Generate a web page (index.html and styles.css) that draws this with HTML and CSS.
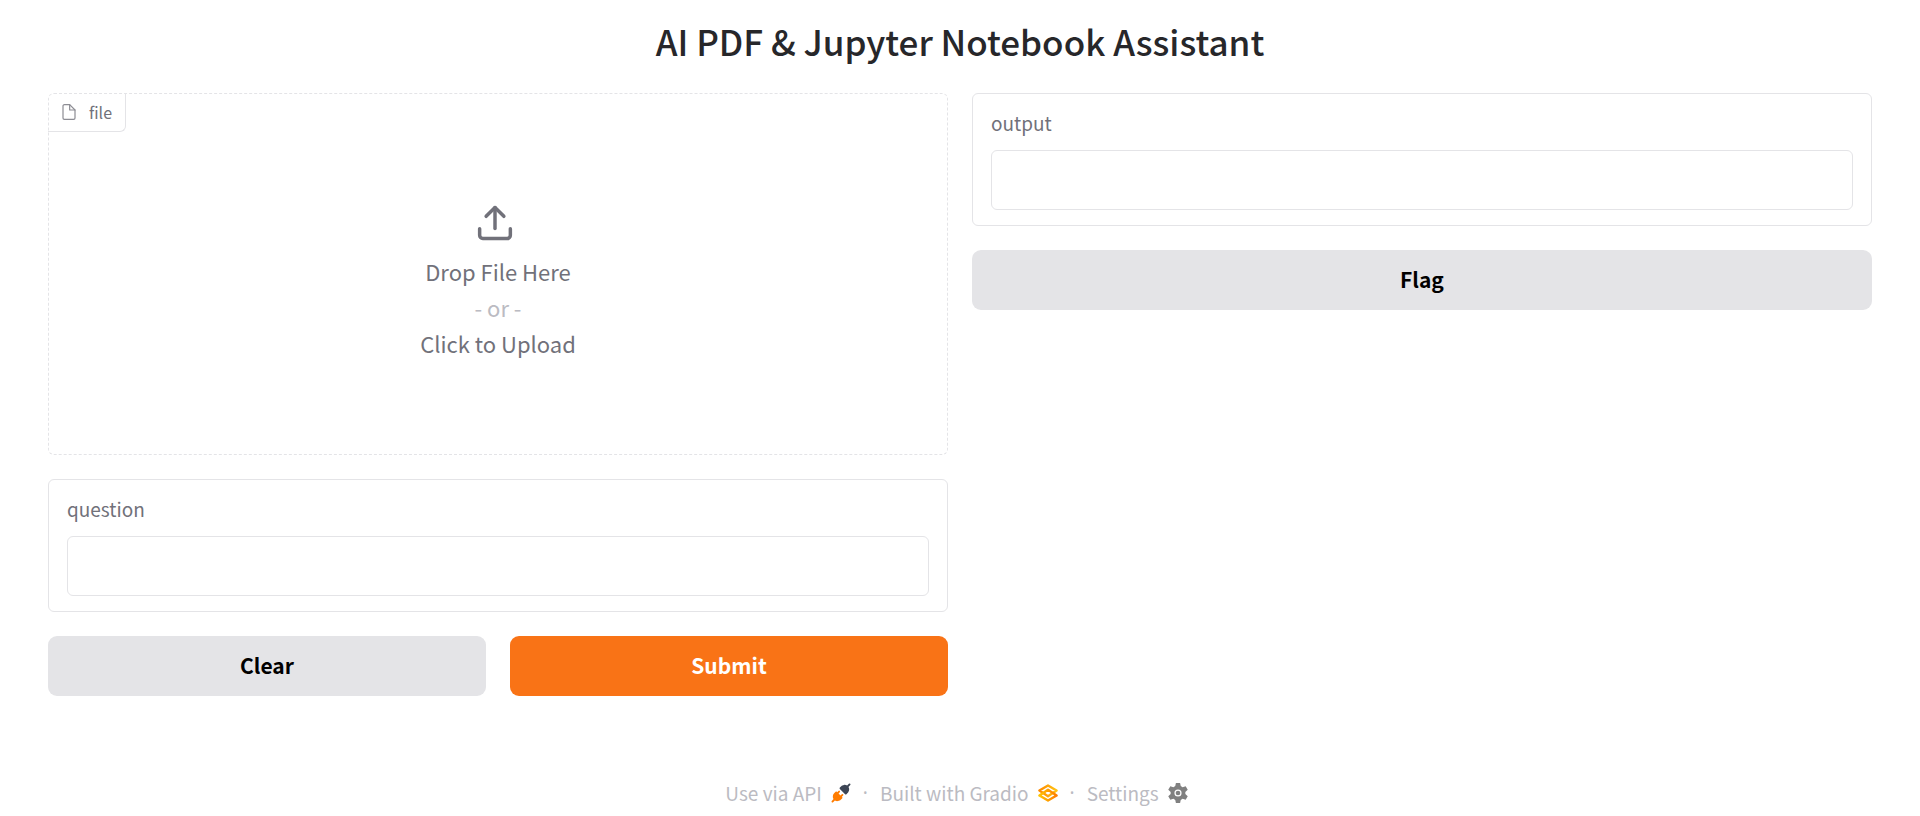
FILE: index.html
```html
<!DOCTYPE html>
<html lang="en">
<head>
<meta charset="utf-8">
<meta name="viewport" content="width=device-width, initial-scale=1">
<title>AI PDF &amp; Jupyter Notebook Assistant</title>
<link rel="stylesheet" href="styles.css">
</head>
<body>
<main class="app">
  <h1 class="title">AI PDF &amp; Jupyter Notebook Assistant</h1>
  <div class="columns">
    <section class="column">
      <div class="upload">
        <div class="upload-label">
          <svg class="file-icon" viewBox="0 0 24 24" fill="none" stroke="currentColor" stroke-width="1.8" stroke-linecap="round" stroke-linejoin="round" aria-hidden="true"><path d="M13 1H5a2 2 0 0 0-2 2v18a2 2 0 0 0 2 2h14a2 2 0 0 0 2-2V9z"/><path d="M13 1v8h8"/></svg>
          <span>file</span>
        </div>
        <button class="upload-area" type="button">
          <svg class="upload-icon" viewBox="0 0 24 24" fill="none" stroke="currentColor" stroke-width="2.2" stroke-linecap="round" stroke-linejoin="round" aria-hidden="true"><path d="M21.7 15.6v4.2a2 2 0 0 1-2 2H4.3a2 2 0 0 1-2-2v-4.2"/><path d="M17.6 7.8L12 2.2 6.4 7.8"/><path d="M12 2.2v13.2"/></svg>
          <span>Drop File Here</span>
          <span class="or">- or -</span>
          <span>Click to Upload</span>
        </button>
      </div>
      <div class="block">
        <label class="label" for="question">question</label>
        <input class="field" id="question" type="text">
      </div>
      <div class="actions">
        <button class="button" type="button">Clear</button>
        <button class="button primary" type="button">Submit</button>
      </div>
    </section>
    <section class="column">
      <div class="block">
        <label class="label" for="output">output</label>
        <input class="field" id="output" type="text" readonly>
      </div>
      <button class="button" type="button">Flag</button>
    </section>
  </div>
  <footer class="footer">
    <button class="footer-link" type="button">Use via API
      <svg class="footer-icon" viewBox="0 0 28 28" aria-hidden="true"><path fill="#3c4555" d="M26.94 2.94a1.33 1.33 0 0 0-1.88-1.88l-2.49 2.48c-1.45-.95-3.03-1.11-4.4-.9-1.62.25-3.06 1.03-3.78 1.75l-2 2a1.33 1.33 0 0 0 0 1.89l7.33 7.33c.52.52 1.37.52 1.89 0l2-2c.72-.72 1.5-2.16 1.75-3.79.2-1.36.05-2.94-.9-4.39z"/><path fill="#ff7c00" d="M12.28 12.94a1.33 1.33 0 0 0-1.89-1.88l-1.72 1.72-.39-.39a1.33 1.33 0 0 0-1.89 0l-2 2c-.72.72-1.5 2.16-1.75 3.78-.2 1.37-.05 2.95.9 4.4l-2.48 2.49a1.33 1.33 0 0 0 1.88 1.88l2.49-2.48c1.45.95 3.03 1.1 4.39.9 1.63-.25 3.07-1.03 3.79-1.75l2-2a1.33 1.33 0 0 0 0-1.89l-.39-.39 1.72-1.72a1.33 1.33 0 0 0-1.88-1.89l-1.73 1.73-2.78-2.79z"/></svg>
    </button>
    <span class="dot">·</span>
    <a class="footer-link" href="#gradio">Built with Gradio
      <svg class="footer-icon" viewBox="0 0 28 28" fill="none" stroke-width="3.4" stroke-linejoin="round" aria-hidden="true"><defs><linearGradient id="upper" x1="0" x2="1"><stop offset="0" stop-color="#ff8a00"/><stop offset="1" stop-color="#ffc414"/></linearGradient><linearGradient id="lower" x1="0" x2="1"><stop offset="0" stop-color="#ffc400"/><stop offset="1" stop-color="#ff7c00"/></linearGradient></defs><path stroke="url(#upper)" d="M2 10.4L14 3.4 26 10.4 14 18.4z"/><path stroke="url(#lower)" d="M2 17.6L14 9.6 26 17.6 14 24.6z"/></svg>
    </a>
    <span class="dot">·</span>
    <button class="footer-link" type="button">Settings
      <svg class="footer-icon" viewBox="0 0 24 24" aria-hidden="true"><path fill="#808080" fill-rule="evenodd" d="M9.5 0h5l.8 3.7 2.2 1.3 3.7-1.2 2.5 4.3-2.9 2.6v2.6l2.9 2.6-2.5 4.3-3.7-1.2-2.2 1.3-.8 3.7h-5l-.8-3.7L6.5 19l-3.7 1.2-2.5-4.3 2.9-2.6v-2.6L.3 8.1l2.5-4.3L6.5 5l2.2-1.3zM12 7.7a4.3 4.3 0 1 0 0 8.6 4.3 4.3 0 0 0 0-8.6z"/><circle cx="12" cy="12" r="2.8" fill="#808080"/></svg>
    </button>
  </footer>
</main>
</body>
</html>
```
FILE: styles.css
```css
* {
  box-sizing: border-box;
}

body {
  margin: 0;
  background: #fff;
  color: #27272a;
  font-family: "Noto Sans CJK SC", "Noto Sans", sans-serif;
  font-size: 19px;
}

button,
input {
  font: inherit;
}

.app {
  padding: 17px 48px 0;
}

.title {
  margin: 0 0 28px;
  font-size: 35px;
  line-height: 48px;
  font-weight: 500;
  text-align: center;
}

.columns {
  display: grid;
  grid-template-columns: 1fr 1fr;
  gap: 24px;
}

.column {
  display: flex;
  flex-direction: column;
  gap: 24px;
}

.upload {
  position: relative;
  border: 1px dashed #e4e4e7;
  border-radius: 6px;
}

.upload-label {
  position: absolute;
  top: -1px;
  left: -1px;
  display: flex;
  align-items: center;
  gap: 12px;
  height: 39px;
  padding: 0 13px;
  border: solid #e4e4e7;
  border-width: 0 1px 1px 0;
  border-radius: 6px 0 6px 0;
  color: #71717a;
  font-size: 16px;
}

.file-icon {
  width: 16px;
  height: 16px;
  opacity: 0.8;
}

.upload-area {
  display: flex;
  flex-direction: column;
  align-items: center;
  justify-content: center;
  width: 100%;
  min-height: 360px;
  padding: 17px 0 0;
  border: 0;
  background: none;
  color: #71717a;
  font-size: 22px;
  line-height: 36px;
}

.upload-icon {
  width: 38px;
  height: 38px;
  margin: 0 6px 11px 0;
}

.or {
  color: #bbbbc2;
}

.block {
  display: flex;
  flex-direction: column;
  gap: 16px;
  padding: 18px 18px 15px;
  border: 1px solid #e4e4e7;
  border-radius: 6px;
}

.label {
  color: #71717a;
  line-height: 22px;
}

.field {
  width: 100%;
  height: 60px;
  padding: 0 15px;
  border: 1px solid #e4e4e7;
  border-radius: 6px;
  background: #fff;
}

.actions {
  display: grid;
  grid-template-columns: 1fr 1fr;
  gap: 24px;
}

.button {
  height: 60px;
  padding: 0 0 3px;
  border: 0;
  border-radius: 9px;
  background: #e4e4e7;
  color: #000;
  font-size: 21px;
  font-weight: 700;
}

.primary {
  background: #f97316;
  color: #fff;
}

.footer {
  display: flex;
  align-items: center;
  justify-content: center;
  gap: 12px;
  margin-top: 84px;
  padding-right: 7px;
  color: #bbbbc2;
  line-height: 26px;
}

.footer-link {
  display: flex;
  align-items: center;
  gap: 9px;
  padding: 0;
  border: 0;
  background: none;
  color: inherit;
  text-decoration: none;
}

.footer-icon {
  width: 20px;
  height: 20px;
}

.dot {
  font-family: "Noto Sans", sans-serif;
}
```
